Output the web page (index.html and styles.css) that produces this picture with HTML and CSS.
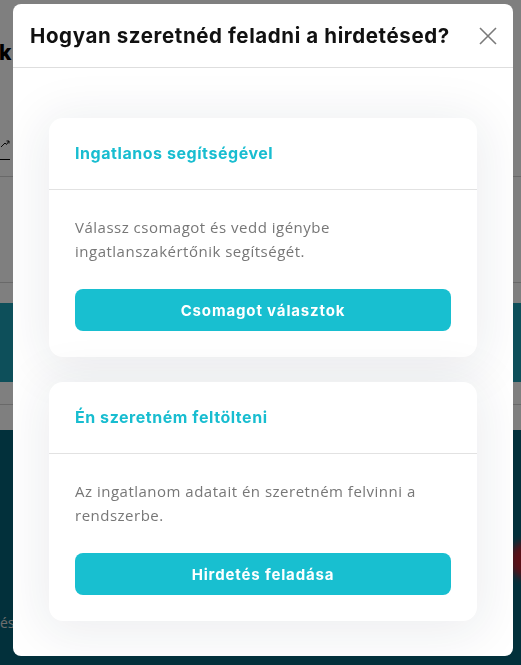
FILE: index.html
```html
<!DOCTYPE html>
<html lang="hu">
<head>
    <meta charset="UTF-8">
    <meta name="viewport" content="width=device-width, initial-scale=1.0">
    <title>Hirdetés feladása</title>
    <link rel="stylesheet" href="styles.css">
</head>
<body>
    <div class="page">
        <div class="page-top">
            <div class="logo-tail">k</div>
            <div class="ext-link">
                <svg width="10" height="8" viewBox="0 0 10 8"><path d="M1 7 L5 3 L6.5 4.5 L9 1 M6.5 1 H9 V3.5" fill="none" stroke="#111" stroke-width="1"/></svg>
            </div>
        </div>
        <div class="page-row tall"></div>
        <div class="page-row short"></div>
        <div class="page-banner"></div>
        <div class="page-row mid"></div>
        <div class="page-row gap"></div>
        <div class="page-hero">
            <span class="hero-text">és</span>
            <span class="hero-dot"></span>
        </div>
    </div>

    <div class="overlay"></div>

    <div class="modal">
        <div class="modal-header">
            <h2>Hogyan szeretnéd feladni a hirdetésed?</h2>
            <button class="close" aria-label="Bezárás">
                <svg width="18" height="18" viewBox="0 0 18 18"><path d="M1 1 L17 17 M17 1 L1 17" stroke="#7a7a7a" stroke-width="1.6"/></svg>
            </button>
        </div>
        <div class="modal-body">
            <div class="option">
                <div class="option-title">Ingatlanos segítségével</div>
                <div class="option-content">
                    <p>Válassz csomagot és vedd igénybe ingatlanszakértőnik segítségét.</p>
                    <button class="btn">Csomagot választok</button>
                </div>
            </div>
            <div class="option">
                <div class="option-title">Én szeretném feltölteni</div>
                <div class="option-content">
                    <p>Az ingatlanom adatait én szeretném felvinni a rendszerbe.</p>
                    <button class="btn">Hirdetés feladása</button>
                </div>
            </div>
        </div>
    </div>
</body>
</html>
```

FILE: styles.css
```css
body {
    margin: 0;
    height: 100vh;
    overflow: hidden;
    font-family: "Open Sans", "Liberation Sans", sans-serif;
}

/* background page */
.page {
    display: flex;
    flex-direction: column;
    height: 100%;
}

.page-top {
    height: 176px;
    background: #fff;
    border-bottom: 1px solid #d2d2d2;
    position: relative;
}

.logo-tail {
    position: absolute;
    left: -1px;
    top: 40px;
    font-family: "Inter", sans-serif;
    font-weight: 800;
    font-size: 21px;
    color: #000;
}

.ext-link {
    position: absolute;
    left: 0;
    top: 131px;
    width: 10px;
    padding-bottom: 6px;
    border-bottom: 1px solid #000;
}

.page-row {
    background: #fff;
}

.page-row.tall {
    height: 105px;
    border-bottom: 1px solid #d2d2d2;
}

.page-row.short {
    height: 20px;
}

.page-banner {
    height: 79px;
    background: #1a9fb5;
}

.page-row.mid {
    height: 22px;
    border-bottom: 1px solid #d2d2d2;
}

.page-row.gap {
    height: 25px;
}

.page-hero {
    flex: 1;
    background: #056177;
    position: relative;
}

.hero-text {
    position: absolute;
    left: 0;
    top: 183px;
    font-size: 14px;
    color: #ddd;
}

.hero-dot {
    position: absolute;
    right: -22px;
    top: 112px;
    width: 34px;
    height: 36px;
    border-radius: 50%;
    background: #b8202e;
    filter: blur(4px);
}

.overlay {
    position: fixed;
    inset: 0;
    background: rgba(0, 0, 0, 0.5);
}

/* modal */
.modal {
    position: fixed;
    left: 13px;
    top: 4px;
    width: 500px;
    background: #fff;
    border-radius: 8px;
    overflow: hidden;
}

.modal-header {
    height: 63px;
    display: flex;
    align-items: center;
    justify-content: space-between;
    padding: 0 16px 0 17px;
    border-bottom: 1px solid #dedede;
}

.modal-header h2 {
    margin: 0;
    font-family: "Inter", sans-serif;
    font-weight: 700;
    font-size: 20.5px;
    color: #111;
    letter-spacing: 0.6px;
}

.close {
    border: none;
    background: none;
    padding: 0;
    width: 18px;
    height: 18px;
    cursor: pointer;
}

.modal-body {
    padding: 50px 36px 35px;
    display: flex;
    flex-direction: column;
    gap: 25px;
}

.option {
    background: #fff;
    border-radius: 14px;
    box-shadow: 0 6px 50px 8px rgba(30, 40, 60, 0.08);
}

.option-title {
    height: 69px;
    display: flex;
    align-items: center;
    padding: 0 26px 2px;
    border-bottom: 1px solid #e2e2e2;
    font-family: "Inter", sans-serif;
    font-weight: 700;
    font-size: 16px;
    letter-spacing: 0.55px;
    color: #18bdd0;
}

.option-content {
    padding: 25px 26px 26px;
}

.option-content p {
    margin: 0 0 26px;
    font-size: 15px;
    line-height: 24px;
    letter-spacing: 0.5px;
    color: #777;
    max-width: 345px;
}

.btn {
    display: block;
    width: 100%;
    height: 42px;
    border: none;
    border-radius: 8px;
    background: #18bfd0;
    color: #fff;
    font-family: "Inter", sans-serif;
    font-weight: 700;
    font-size: 15px;
    letter-spacing: 0.85px;
    cursor: pointer;
}
```
